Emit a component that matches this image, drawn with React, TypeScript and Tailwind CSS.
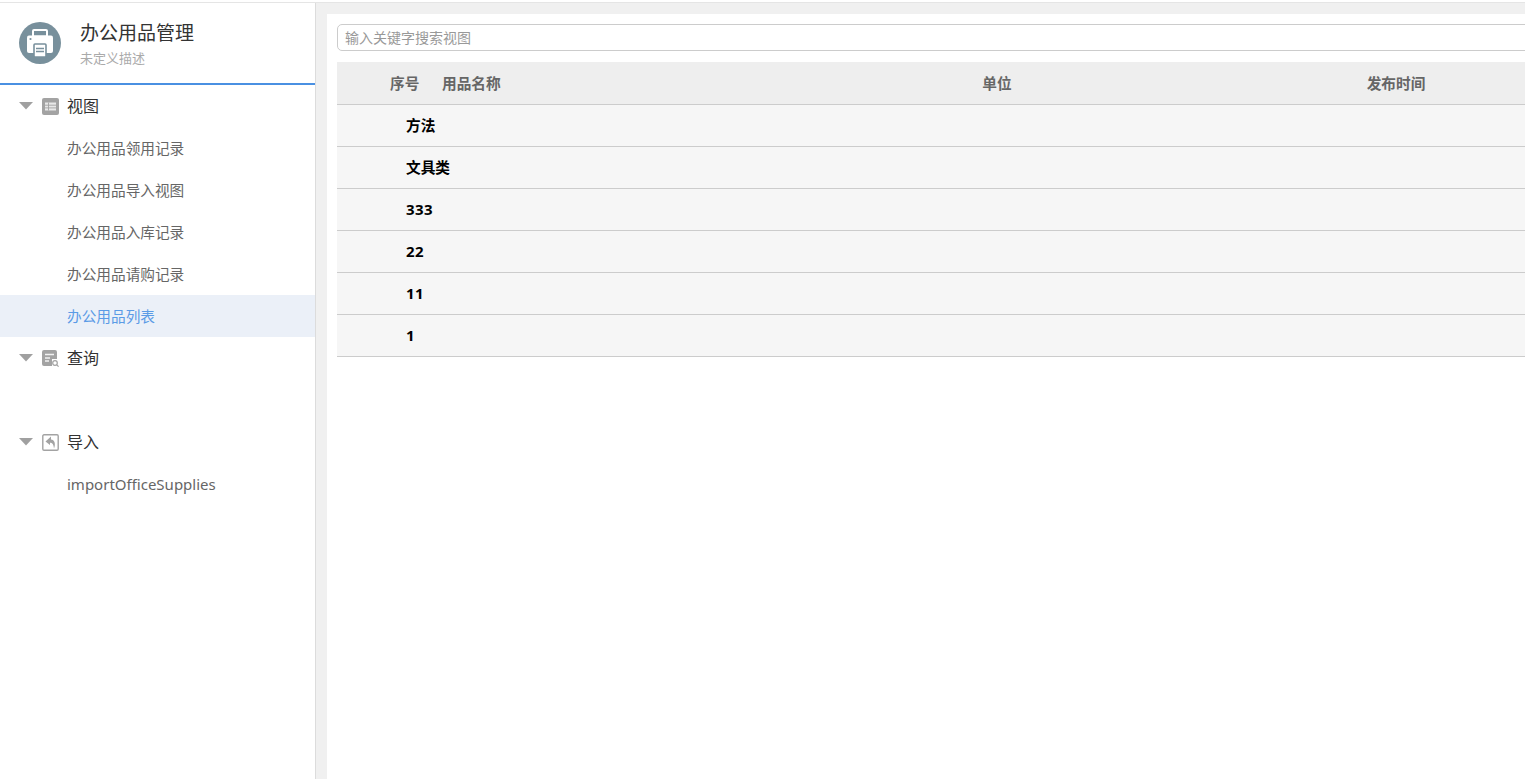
import React from "react";

const font = "font-['Noto_Sans','Noto_Sans_CJK_SC',sans-serif]";

function Caret() {
  return (
    <svg width="14" height="8" viewBox="0 0 14 8" className="shrink-0">
      <path d="M0 0H14L7 7.5Z" fill="#a0a0a0" />
    </svg>
  );
}

function ViewIcon() {
  return (
    <svg width="17" height="17" viewBox="0 0 17 17" className="shrink-0">
      <rect width="17" height="17" rx="2" fill="#a3a3a3" />
      <rect x="3" y="4.5" width="11" height="8" fill="#e8e8e8" />
      <path d="M3 7.2H14M3 9.9H14M6.5 4.5V12.5" stroke="#a3a3a3" strokeWidth="0.9" />
    </svg>
  );
}

function QueryIcon() {
  return (
    <svg width="17" height="17" viewBox="0 0 17 17" className="shrink-0">
      <path d="M2 0H13A2 2 0 0 1 15 2V9H10V16H2A2 2 0 0 1 0 14V2A2 2 0 0 1 2 0Z" fill="#a3a3a3" />
      <path d="M3 4.5H12M3 8H8M3 11H7" stroke="#f2f2f2" strokeWidth="1.3" />
      <circle cx="13" cy="13" r="2.3" fill="none" stroke="#a3a3a3" strokeWidth="1.2" />
      <path d="M14.8 14.8L16.6 16.6" stroke="#a3a3a3" strokeWidth="1.2" />
    </svg>
  );
}

function ImportIcon() {
  return (
    <svg width="17" height="17" viewBox="0 0 17 17" className="shrink-0">
      <path d="M2 .8H15A1.2 1.2 0 0 1 16.2 2V15A1.2 1.2 0 0 1 15 16.2H2A1.2 1.2 0 0 1 .8 15V2A1.2 1.2 0 0 1 2 .8Z" fill="none" stroke="#a3a3a3" strokeWidth="1.4" />
      <path d="M9 2.5L3.5 7.5L8 11V8.8C10.5 8.8 11.5 10.5 12 14.5C14 10 12.5 5.8 9 5.6Z" fill="#a3a3a3" />
    </svg>
  );
}

function PrinterLogo() {
  return (
    <svg width="42" height="42" viewBox="0 0 42 42" className="shrink-0">
      <circle cx="21" cy="21" r="21" fill="#78909c" />
      <rect x="14" y="8" width="14" height="6.5" rx="1" fill="none" stroke="#fff" strokeWidth="2" />
      <path d="M10 13.5H32A2 2 0 0 1 34 15.5V29A2 2 0 0 1 32 31H10A2 2 0 0 1 8 29V15.5A2 2 0 0 1 10 13.5Z" fill="#fff" />
      <circle cx="11.5" cy="17" r="1.1" fill="#78909c" />
      <rect x="15" y="22" width="12" height="13" rx="1" fill="#fff" stroke="#78909c" strokeWidth="1.6" />
      <path d="M17 26.5H25M17 29.5H25" stroke="#78909c" strokeWidth="1.4" />
    </svg>
  );
}

function Group({ icon, label }: { icon: React.ReactNode; label: string }) {
  return (
    <div className="flex h-[42px] items-center pl-[19px] text-[16px] text-[#333]">
      <Caret />
      <span className="ml-[9px] flex">{icon}</span>
      <span className="ml-[8px]">{label}</span>
    </div>
  );
}

function Item({ label, active, latin }: { label: string; active?: boolean; latin?: boolean }) {
  return (
    <div className={`flex h-[42px] items-center pl-[67px] ${latin ? "text-[15px]" : "text-[14.67px]"} ${active ? "bg-[#ebf0f8] text-[#5b9be6]" : "text-[#666]"}`}>
      {label}
    </div>
  );
}

const rows = ["方法", "文具类", "333", "22", "11", "1"];

export default function App() {
  return (
    <div className={`${font} flex h-[779px] w-[1525px] flex-col overflow-hidden bg-[#f0f0f0]`}>
      <div className="h-[2px] shrink-0 bg-white" />
      <div className="flex min-h-0 flex-1 border-t border-[#e5e5e5]">
        <aside className="flex w-[316px] shrink-0 flex-col border-r border-[#dcdcdc] bg-white">
          <header className="flex h-[82px] shrink-0 items-center border-b-2 border-[#4a90e2] pl-[19px]">
            <PrinterLogo />
            <div className="ml-[19px] flex flex-col pt-[3px]">
              <span className="text-[19px] leading-[26px] text-[#333]">办公用品管理</span>
              <span className="text-[13px] leading-[24px] text-[#aaa]">未定义描述</span>
            </div>
          </header>
          <Group icon={<ViewIcon />} label="视图" />
          <Item label="办公用品领用记录" />
          <Item label="办公用品导入视图" />
          <Item label="办公用品入库记录" />
          <Item label="办公用品请购记录" />
          <Item label="办公用品列表" active />
          <Group icon={<QueryIcon />} label="查询" />
          <div className="h-[42px]" />
          <Group icon={<ImportIcon />} label="导入" />
          <Item label="importOfficeSupplies" latin />
        </aside>
        <main className="ml-[11px] mt-[11px] min-w-0 flex-1 overflow-hidden bg-white pl-[10px] pt-[10px]">
          <div className="flex h-[27px] w-[1300px] items-center rounded-[5px] border border-[#ccc] pl-[7px] text-[14px] text-[#999]">
            输入关键字搜索视图
          </div>
          <div className="mt-[11px] w-[1300px]">
            <div className="flex h-[43px] items-center border-b border-[#ccc] bg-[#eeeeee] text-[14.67px] font-bold text-[#666]">
              <span className="ml-[53px] w-[30px] whitespace-nowrap">序号</span>
              <span className="ml-[22px] w-[355px] whitespace-nowrap">用品名称</span>
              <span className="w-[400px] text-center">单位</span>
              <span className="w-[398px] text-center">发布时间</span>
            </div>
            {rows.map((r) => (
              <div key={r} className={`flex h-[42px] items-center border-b border-[#ccc] bg-[#f6f6f6] pl-[69px] font-bold text-black ${/^\d+$/.test(r) ? "text-[15px] tracking-[0.4px]" : "pb-[1px] text-[14.67px]"}`}>
                {r}
              </div>
            ))}
          </div>
        </main>
      </div>
    </div>
  );
}
